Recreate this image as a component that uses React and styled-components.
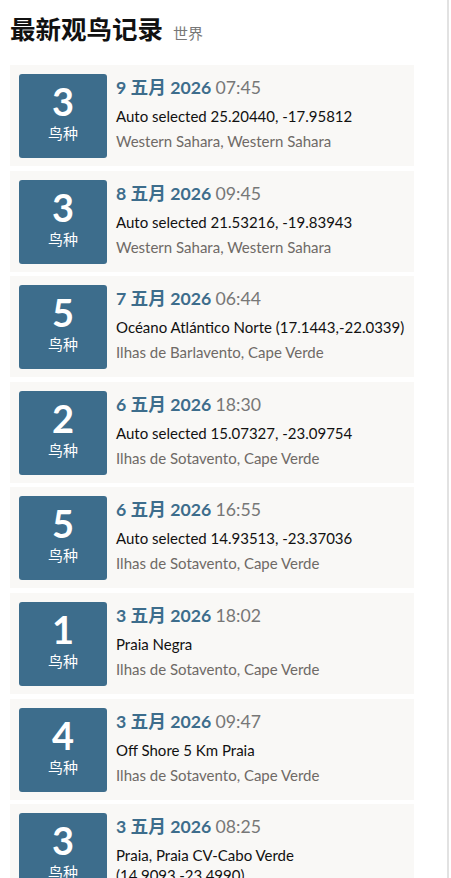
import styled, { createGlobalStyle } from "styled-components"

const Global = createGlobalStyle`
    html, body {
        margin: 0;
        padding: 0;
        background: #fff;
    }
    body {
        font-family: Lato, "Noto Sans CJK SC", sans-serif;
        color: #222;
    }
`

const Page = styled.div`
    width: 449px;
    min-height: 878px;
    border-right: 2px solid #e2e2e2;
    padding: 10px 33px 0 10px;
    box-sizing: border-box;
    overflow: hidden;
`

const Titulo = styled.h2`
    margin: 0 0 14px 0;
    font-size: 25.5px;
    font-weight: 700;
    line-height: 36px;
    color: #111;
    font-family: "Noto Sans CJK SC", sans-serif;
`

const Sub = styled.span`
    font-size: 15px;
    font-weight: 400;
    color: #777;
    margin-left: 10px;
`

const Lista = styled.div`
    display: flex;
    flex-direction: column;
    gap: 4.6px;
`

const Card = styled.div`
    display: flex;
    gap: 9px;
    background: #f9f8f6;
    padding: 9px 9px 8px 9px;
    min-height: 101px;
    box-sizing: border-box;
`

const Badge = styled.div`
    flex: 0 0 88px;
    height: 84px;
    background: #3d6d8c;
    border-radius: 3px;
    color: #fff;
    display: flex;
    flex-direction: column;
    align-items: center;
    padding-top: 8px;
    box-sizing: border-box;
`

const Numero = styled.div`
    font-size: 38px;
    font-weight: 700;
    line-height: 38px;
`

const Especie = styled.div`
    font-size: 15px;
    line-height: 18px;
    margin-top: 4px;
    font-family: "Noto Sans CJK SC", sans-serif;
`

const Info = styled.div`
    display: flex;
    flex-direction: column;
    padding-top: 2px;
`

const Data = styled.div`
    font-size: 17.7px;
    line-height: 24px;
    font-weight: 700;
    color: #3d6d8c;
`

const Hora = styled.span`
    font-weight: 400;
    color: #777;
`

const Local = styled.div`
    font-size: 15px;
    line-height: 20px;
    margin-top: 6px;
    color: #111;
`

const Regiao = styled.div`
    font-size: 15px;
    line-height: 20px;
    margin-top: 5px;
    color: #6f6a66;
`

const registros = [
    { n: 3, data: "9 五月 2026", hora: "07:45", local: "Auto selected 25.20440, -17.95812", regiao: "Western Sahara, Western Sahara" },
    { n: 3, data: "8 五月 2026", hora: "09:45", local: "Auto selected 21.53216, -19.83943", regiao: "Western Sahara, Western Sahara" },
    { n: 5, data: "7 五月 2026", hora: "06:44", local: "Océano Atlántico Norte (17.1443,-22.0339)", regiao: "Ilhas de Barlavento, Cape Verde" },
    { n: 2, data: "6 五月 2026", hora: "18:30", local: "Auto selected 15.07327, -23.09754", regiao: "Ilhas de Sotavento, Cape Verde" },
    { n: 5, data: "6 五月 2026", hora: "16:55", local: "Auto selected 14.93513, -23.37036", regiao: "Ilhas de Sotavento, Cape Verde" },
    { n: 1, data: "3 五月 2026", hora: "18:02", local: "Praia Negra", regiao: "Ilhas de Sotavento, Cape Verde" },
    { n: 4, data: "3 五月 2026", hora: "09:47", local: "Off Shore 5 Km Praia", regiao: "Ilhas de Sotavento, Cape Verde" },
    { n: 3, data: "3 五月 2026", hora: "08:25", local: "Praia, Praia CV-Cabo Verde (14.9093,-23.4990)", regiao: "Ilhas de Sotavento, Cape Verde" },
]

function App(){
    return(
        <>
            <Global />
            <Page>
                <Titulo>最新观鸟记录<Sub>世界</Sub></Titulo>
                <Lista>
                    {
                        registros.map((r, i)=>(
                            <Card key={i}>
                                <Badge>
                                    <Numero>{r.n}</Numero>
                                    <Especie>鸟种</Especie>
                                </Badge>
                                <Info>
                                    <Data>{r.data} <Hora>{r.hora}</Hora></Data>
                                    <Local>{r.local}</Local>
                                    <Regiao>{r.regiao}</Regiao>
                                </Info>
                            </Card>
                        ))
                    }
                </Lista>
            </Page>
        </>
    )
}
export default App
